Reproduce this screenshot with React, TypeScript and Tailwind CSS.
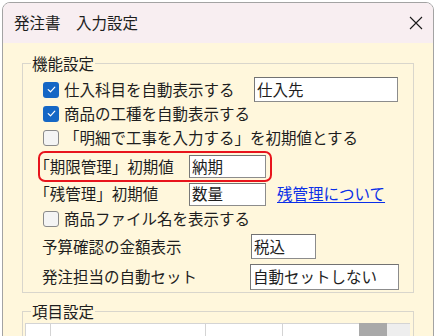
import React from 'react'

const font = "font-['Noto_Sans_CJK_JP','Noto_Sans',sans-serif]"

const CheckBox: React.FC<{ checked?: boolean }> = ({ checked }) =>
  checked ? (
    <span className="w-[16px] h-[16px] rounded-[3px] bg-[#1567c5] flex items-center justify-center shrink-0">
      <svg width="11" height="11" viewBox="0 0 11 11" fill="none">
        <path d="M2.2 5.6 L4.5 7.8 L8.8 3.2" stroke="#fff" strokeWidth="1.2" strokeLinecap="round" strokeLinejoin="round" />
      </svg>
    </span>
  ) : (
    <span className="w-[16px] h-[16px] rounded-[3px] bg-[#f4f4f4] border border-[#8a8a8a] shrink-0" />
  )

const TextBox: React.FC<{ value: string; className: string }> = ({ value, className }) => (
  <div
    className={`bg-white border border-[#8c8c8c] border-t-[#727272] border-l-[#787878] flex items-center pl-[2px] leading-none ${className}`}
  >
    {value}
  </div>
)

const Open = () => <span className="[font-feature-settings:'halt']">「</span>

const CheckRow: React.FC<{ checked?: boolean; label: React.ReactNode; className: string; children?: React.ReactNode }> = ({
  checked,
  label,
  className,
  children
}) => (
  <div className={`flex items-center ml-[20px] ${className}`}>
    <div className="flex items-center gap-[5px] w-[211px] whitespace-nowrap">
      <CheckBox checked={checked} />
      <span>{label}</span>
    </div>
    {children}
  </div>
)

const App: React.FC = () => {
  return (
    <div className={`w-[435px] h-[336px] bg-white overflow-hidden pt-[2px] text-[15.5px] text-[#1e1e1e] ${font}`}>
      <div className="ml-[2px] w-[432px] h-[340px] rounded-t-[8px] border border-[#a3a3a3] overflow-hidden flex flex-col">
        {/* title bar */}
        <div className="h-[40px] bg-[#f8eef1] flex items-center justify-between pl-[11px] pr-[10px] shrink-0">
          <span className="leading-none">発注書　入力設定</span>
          <svg width="14" height="14" viewBox="0 0 14 14" fill="none">
            <path d="M1 1 L13 13 M13 1 L1 13" stroke="#1a1a1a" strokeWidth="1.1" />
          </svg>
        </div>

        <div className="flex-1 bg-[#fff7dc] pt-[9px]">
          <fieldset className="ml-[19px] w-[392px] border border-[#d9d6cc] pb-[2px]">
            <legend className="ml-[8px] px-[1px] leading-[22px]">機能設定</legend>

            <CheckRow checked label="仕入科目を自動表示する" className="mt-[3px] h-[25px]">
              <TextBox value="仕入先" className="w-[144px] h-[25px]" />
            </CheckRow>
            <CheckRow checked label="商品の工種を自動表示する" className="h-[23px]" />
            <CheckRow label="「明細で工事を入力する」を初期値とする" className="h-[25px]" />

            <div className="ml-[15px] mt-[1px] w-[234px] h-[31px] border-2 border-[#e8141c] rounded-[7px] flex items-center pl-[2px]">
              <span className="w-[147px] whitespace-nowrap">
                <Open />期限管理」初期値
              </span>
              <TextBox value="納期" className="w-[77px] h-[23px]" />
            </div>

            <div className="ml-[19px] h-[24px] flex items-center">
              <span className="w-[147px] whitespace-nowrap">
                <Open />残管理」初期値
              </span>
              <TextBox value="数量" className="w-[77px] h-[23px]" />
              <a className="ml-[11px] text-[#0a2fe8] underline underline-offset-[2px] leading-none">残管理について</a>
            </div>

            <CheckRow label="商品ファイル名を表示する" className="h-[26px]" />

            <div className="ml-[19px] mt-[2px] h-[25px] flex items-center">
              <span className="w-[209px] whitespace-nowrap">予算確認の金額表示</span>
              <TextBox value="税込" className="w-[65px] h-[25px]" />
            </div>

            <div className="ml-[19px] mt-[5px] h-[26px] flex items-center">
              <span className="w-[208px] whitespace-nowrap">発注担当の自動セット</span>
              <TextBox value="自動セットしない" className="w-[149px] h-[26px]" />
            </div>
          </fieldset>

          <fieldset className="ml-[19px] mt-[7px] w-[392px] h-[60px] border border-[#d9d6cc]">
            <legend className="ml-[8px] px-[1px] leading-[22px]">項目設定</legend>
            <div className="ml-[2px] mt-[1px] flex h-[22px]">
              <div className="w-[25px] bg-white border-t border-l border-[#d4d4d4]" />
              <div className="w-[155px] bg-white border-t border-l border-[#d4d4d4]" />
              <div className="w-[77px] bg-white border-t border-l border-[#d4d4d4]" />
              <div className="w-[77px] bg-white border-t border-l border-[#d4d4d4]" />
              <div className="w-[28px] bg-[#a9a9a9]" />
              <div className="w-[23px] bg-[#eeeeee] border-t border-[#d4d4d4]" />
            </div>
          </fieldset>
        </div>
      </div>
    </div>
  )
}

export default App
